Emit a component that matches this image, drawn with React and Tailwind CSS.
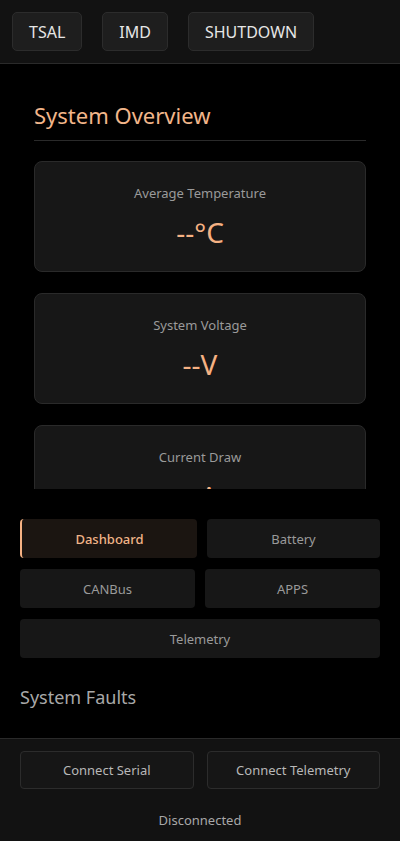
import { useState } from 'react'

const cards = [
  { label: 'Average Temperature', value: '--°C' },
  { label: 'System Voltage', value: '--V' },
  { label: 'Current Draw', value: '--A' },
]

function StatusButton({ children }) {
  return (
    <button className="h-[39px] px-4 bg-[#1e1e1e] border border-[#2c2c2c] rounded-[5px] text-[16px] text-[#e6e6e6]">
      {children}
    </button>
  )
}

function Tab({ label, active, onClick, className = '' }) {
  return (
    <button
      onClick={onClick}
      className={
        active
          ? `h-[39px] pt-[2px] rounded-[4px] bg-[#1b1511] border-l-2 border-[#f5b183] text-[13px] font-medium text-[#f0b488] ${className}`
          : `h-[39px] pt-[2px] rounded-[4px] bg-[#171717] text-[13px] text-[#9a9a9a] ${className}`
      }
    >
      {label}
    </button>
  )
}

export default function App() {
  const [tab, setTab] = useState('Dashboard')

  return (
    <div
      className="h-[841px] w-full bg-black flex flex-col overflow-hidden"
      style={{ fontFamily: '"Noto Sans", "Open Sans", sans-serif' }}
    >
      {/* Top status bar */}
      <header className="h-[64px] shrink-0 bg-[#121212] border-b border-[#2a2a2a] flex items-start gap-5 px-3 pt-3">
        <StatusButton>TSAL</StatusButton>
        <StatusButton>IMD</StatusButton>
        <StatusButton>SHUTDOWN</StatusButton>
      </header>

      {/* Scrollable overview */}
      <section className="h-[425px] shrink-0 overflow-hidden px-[34px] pt-[36px]">
        <h2 className="text-[22px] leading-[30px] text-[#f2b68a] pb-[10px] border-b border-[#2a2a2a]">
          System Overview
        </h2>
        <div className="mt-[20px] flex flex-col gap-[21px]">
          {cards.map((c) => (
            <div
              key={c.label}
              className="h-[111px] rounded-[8px] bg-[#171717] border border-[#2a2a2a] flex flex-col items-center pt-[21px]"
            >
              <span className="text-[13px] leading-[20px] text-[#9a9a9a]">{c.label}</span>
              <span className="mt-[11px] text-[28px] leading-[36px] text-[#f5b183]">{c.value}</span>
            </div>
          ))}
        </div>
      </section>

      {/* Navigation tabs */}
      <nav className="px-5 pt-[30px] flex flex-col gap-[11px]">
        <div className="flex gap-[10px]">
          <Tab label="Dashboard" active={tab === 'Dashboard'} onClick={() => setTab('Dashboard')} className="w-[177px]" />
          <Tab label="Battery" active={tab === 'Battery'} onClick={() => setTab('Battery')} className="flex-1" />
        </div>
        <div className="flex gap-[10px]">
          <Tab label="CANBus" active={tab === 'CANBus'} onClick={() => setTab('CANBus')} className="flex-1" />
          <Tab label="APPS" active={tab === 'APPS'} onClick={() => setTab('APPS')} className="flex-1" />
        </div>
        <Tab label="Telemetry" active={tab === 'Telemetry'} onClick={() => setTab('Telemetry')} className="w-full" />
      </nav>

      <div className="px-5 pt-[26px] flex-1">
        <h3 className="text-[18px] leading-[26px] text-[#a8a8a8]">System Faults</h3>
      </div>

      {/* Connection footer */}
      <footer className="h-[103px] shrink-0 bg-[#121212] border-t border-[#2a2a2a] px-5 pt-[12px] flex flex-col items-center">
        <div className="w-full flex gap-[13px]">
          <button className="flex-1 h-[38px] pt-px rounded-[4px] bg-[#161616] border border-[#2c2c2c] text-[13px] text-[#b8b8b8]">
            Connect Serial
          </button>
          <button className="flex-1 h-[38px] pt-px rounded-[4px] bg-[#161616] border border-[#2c2c2c] text-[13px] text-[#b8b8b8]">
            Connect Telemetry
          </button>
        </div>
        <span className="mt-[22px] text-[13px] text-[#a8a8a8]">Disconnected</span>
      </footer>
    </div>
  )
}
